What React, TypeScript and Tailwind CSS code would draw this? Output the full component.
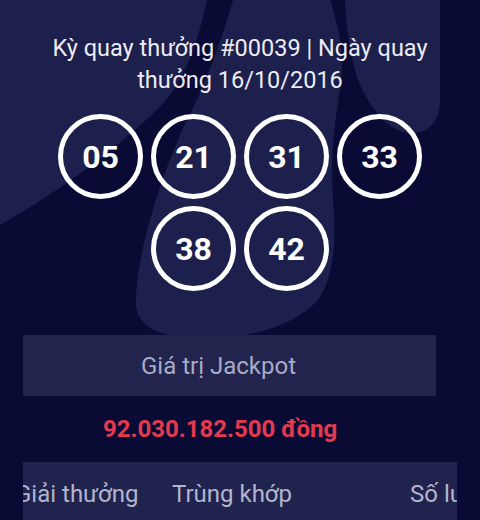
const numbers = ["05", "21", "31", "33", "38", "42"];

function BackdropShape() {
  return (
    <svg
      className="absolute inset-0 h-full w-full"
      viewBox="0 0 480 520"
      preserveAspectRatio="none"
      aria-hidden="true"
    >
      <path
        d="M0,0 H207 C197,45 185,80 160,107 C120,145 70,185 0,225 Z"
        fill="#1d1f4d"
      />
      <path
        d="M233,0 H330 C340,30 345,60 340,90 C334,125 330,160 333,200 C336,240 335,275 318,300 C295,325 255,338 205,338 C165,338 138,330 136,305 C135,260 160,170 197,100 C212,65 225,30 233,0 Z"
        fill="#1d1f4d"
      />
      <path
        d="M345,0 H440 V100 C440,120 430,133 412,133 C390,133 370,110 358,80 C350,55 346,25 345,0 Z"
        fill="#1d1f4d"
      />
    </svg>
  );
}

function Ball({ value }: { value: string }) {
  return (
    <div className="flex h-[85px] w-[85px] items-center justify-center rounded-full border-[5px] border-white">
      <span className="text-[32px] font-bold leading-none text-white">{value}</span>
    </div>
  );
}

export default function App() {
  return (
    <div className="relative h-[520px] w-[480px] overflow-hidden bg-[#0a0b35] font-['Roboto',sans-serif]">
      <BackdropShape />

      <div className="relative flex flex-col items-center pt-[32px]">
        {/* Draw header */}
        <h2 className="w-[420px] text-center text-[23.5px] leading-[32px] font-normal text-[#ececf2]">
          Kỳ quay thưởng #00039 | Ngày quay thưởng 16/10/2016
        </h2>

        {/* Winning numbers */}
        <div className="mt-[18px] flex w-[420px] flex-wrap justify-center gap-x-2 gap-y-[7px]">
          {numbers.map((n) => (
            <Ball key={n} value={n} />
          ))}
        </div>

        {/* Jackpot */}
        <div className="mt-[44px] ml-[23px] flex h-[61px] w-[413px] items-center justify-center self-start bg-[#22244e] pr-[22px]">
          <span className="text-[24px] text-[#a9abc6]">Giá trị Jackpot</span>
        </div>
        <p className="mt-[21px] ml-[103px] self-start text-[24px] leading-[24px] font-bold text-[#e43a4f]">
          92.030.182.500 đồng
        </p>

        {/* Prize table header, scrolled */}
        <div className="mt-[21px] ml-[23px] h-[60px] w-[434px] self-start overflow-hidden bg-[#21234f]">
          <div className="-ml-[8px] flex whitespace-nowrap pt-[20px] text-[24px] leading-[24px] text-[#b3b5cc]">
            <span className="w-[157px] shrink-0">Giải thưởng</span>
            <span className="w-[238px] shrink-0">Trùng khớp</span>
            <span className="shrink-0">Số lượng giải</span>
          </div>
        </div>
      </div>
    </div>
  );
}
